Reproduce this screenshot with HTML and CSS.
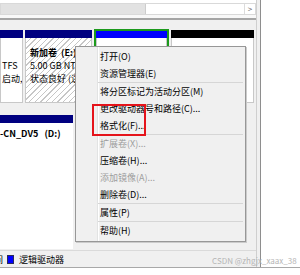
FILE: index.html
```html
<!DOCTYPE html>
<html lang="zh-CN">
<head>
  <meta charset="UTF-8">
  <title>磁盘管理</title>
  <link rel="stylesheet" href="styles.css">
</head>
<body>
  <div class="screen">
    <div class="window">
      <div class="main">
        <div class="top-gap"></div>
        <div class="hscroll">
          <div class="thumb"></div>
          <div class="track"></div>
          <div class="arrow">&gt;</div>
        </div>
        <div class="below-scroll"></div>
        <div class="splitter"></div>

        <div class="diskmap">
          <div class="disk-row row-one">
            <div class="part part-a">
              <div class="bar"></div>
              <div class="part-body">
                <div>&nbsp;</div>
                <div>TFS</div>
                <div>启动,</div>
              </div>
            </div>
            <div class="part part-e">
              <div class="bar"></div>
              <div class="part-body hatched">
                <div class="name">新加卷&nbsp; (E:)</div>
                <div>5.00 GB NTFS</div>
                <div>状态良好 (逻辑驱动器)</div>
              </div>
            </div>
            <div class="part part-sel">
              <div class="bar blue"></div>
              <div class="part-body"></div>
            </div>
            <div class="part part-free">
              <div class="bar black"></div>
              <div class="part-body"></div>
            </div>
          </div>

          <div class="disk-row row-two">
            <div class="part part-d">
              <div class="bar"></div>
              <div class="part-body">
                <div class="name">-CN_DV5&nbsp;&nbsp; (D:)</div>
              </div>
            </div>
          </div>
        </div>

        <div class="legend">
          <span class="legend-cut">可用空间</span>
          <span class="swatch"></span>
          <span>逻辑驱动器</span>
        </div>
      </div>
      <div class="side"></div>
    </div>
  </div>
  <div class="bottom-line"></div>

  <div class="menu">
    <div class="menu-item">打开(O)</div>
    <div class="menu-item">资源管理器(E)</div>
    <div class="sep"></div>
    <div class="menu-item">将分区标记为活动分区(M)</div>
    <div class="menu-item">更改驱动器号和路径(C)...</div>
    <div class="menu-item">格式化(F)...</div>
    <div class="sep"></div>
    <div class="menu-item disabled">扩展卷(X)...</div>
    <div class="menu-item">压缩卷(H)...</div>
    <div class="menu-item disabled">添加镜像(A)...</div>
    <div class="menu-item">删除卷(D)...</div>
    <div class="sep"></div>
    <div class="menu-item">属性(P)</div>
    <div class="sep"></div>
    <div class="menu-item">帮助(H)</div>
    <div class="highlight"></div>
  </div>

  <div class="watermark">CSDN @zhgjx_xaax_38</div>
</body>
</html>
```

FILE: styles.css
```css
* {
  box-sizing: border-box;
}
body {
  margin: 0;
  width: 300px;
  height: 275px;
  position: relative;
  overflow: hidden;
  background: #fff;
  font-family: "Noto Sans CJK SC", "Noto Sans", sans-serif;
  font-size: 9px;
  color: #000;
}
.screen {
  display: flex;
  height: 267px;
}
.window {
  display: flex;
  width: 261px;
  border-right: 1px solid #8e8e8e;
  background: #f0f0f0;
}
.main {
  width: 256px;
  display: flex;
  flex-direction: column;
}
.side {
  flex: 1;
  border-left: 1px solid #cfcfcf;
  background: #f0f0f0;
}
.top-gap {
  height: 3px;
  background: #fff;
}
.hscroll {
  height: 12px;
  display: flex;
  border: 1px solid #d9d9d9;
  background: #fff;
}
.hscroll .thumb {
  width: 145px;
  background: #e2e2e2;
  border-right: 1px solid #cdcdcd;
}
.hscroll .track {
  flex: 1;
}
.hscroll .arrow {
  width: 11px;
  border-left: 1px solid #dcdcdc;
  font-size: 8px;
  line-height: 10px;
  text-align: center;
  color: #606060;
}
.below-scroll {
  height: 3px;
  background: #f8f8f8;
}
.splitter {
  height: 2px;
  background: #a5a5a5;
}
.diskmap {
  flex: 1;
  display: flex;
  flex-direction: column;
  padding-top: 10px;
  padding-bottom: 1px;
}
.disk-row {
  display: flex;
  gap: 2px;
}
.row-one {
  height: 73px;
}
.row-two {
  flex: 1;
  margin-top: 12px;
}
.part {
  display: flex;
  flex-direction: column;
}
.part-a { width: 23px; }
.part-e { width: 67px; }
.part-sel {
  width: 75px;
  border: 2px solid #1c9a1c;
  margin-top: -1px;
}
.part-free { width: 83px; }
.part-d { width: 73px; }
.bar {
  height: 8px;
  background: #000080;
}
.bar.blue {
  height: 7px;
  background: #0000ff;
}
.bar.black {
  background: #000;
}
.part-body {
  flex: 1;
  background: #fff;
  border: 1px solid #c8c8c8;
  border-top: none;
  padding: 8px 0 0 1px;
  line-height: 13px;
  white-space: nowrap;
  overflow: hidden;
}
.part-e .part-body {
  padding-left: 4px;
}
.part-d .part-body {
  padding-top: 4px;
  padding-left: 0;
  border: none;
}
.hatched {
  background: repeating-linear-gradient(135deg, #fff 0 3px, #c6c6c6 3px 4px);
}
.name {
  font-weight: bold;
}
.legend {
  height: 17px;
  display: flex;
  align-items: center;
  gap: 4px;
  border-top: 1px solid #dadada;
  overflow: hidden;
  white-space: nowrap;
}
.legend-cut {
  margin-left: -33px;
}
.swatch {
  width: 7px;
  height: 9px;
  background: #0000ff;
  border: 1px solid #2a2a5a;
  margin-right: 1px;
}
.bottom-line {
  height: 1px;
  background: #a8a8a8;
}
.menu {
  position: absolute;
  left: 75px;
  top: 46px;
  width: 171px;
  height: 196px;
  padding: 1px 2px;
  border: 1px solid #979797;
  background: linear-gradient(to right, #f0f0f0 21px, #e2e3e3 21px 22px, #fff 22px 23px, #f0f0f0 23px);
  box-shadow: 1px 1px 0 #cbcbcb;
}
.menu-item {
  height: 17px;
  line-height: 17px;
  padding-left: 22px;
  white-space: nowrap;
}
.menu-item.disabled {
  color: #9d9d9d;
}
.sep {
  height: 1px;
  margin-left: 20px;
  background: #d6d6d6;
}
.highlight {
  position: absolute;
  left: 16px;
  top: 57px;
  width: 54px;
  height: 32px;
  border: 2px solid #e5141b;
}
.watermark {
  position: absolute;
  left: 212px;
  top: 255px;
  font-size: 8px;
  line-height: 12px;
  color: #b5b5b5;
}
```
